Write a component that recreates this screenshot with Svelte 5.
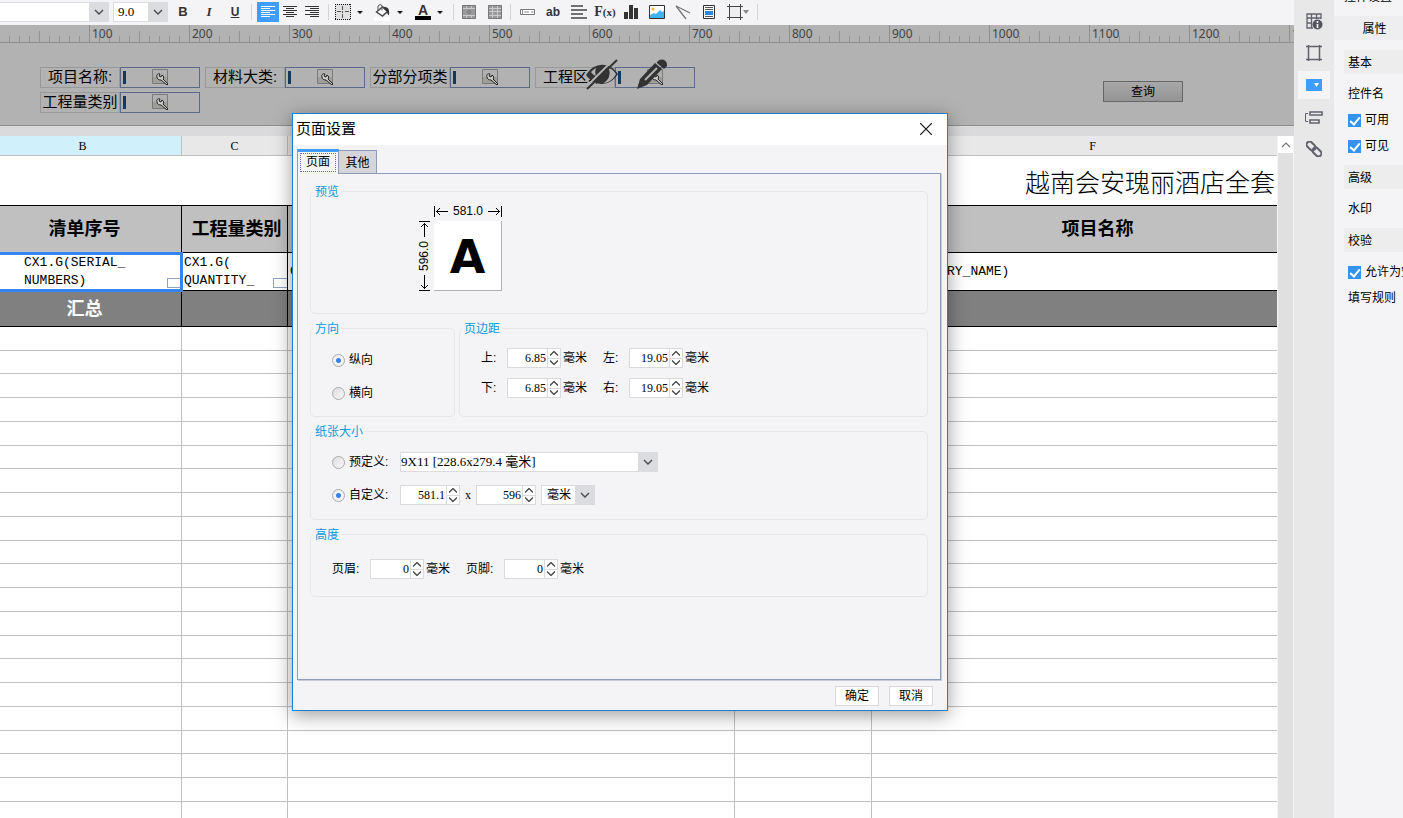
<script lang="ts">
  interface Filter {
    id: string;
    label: string;
  }

  const filters: Filter[] = [
    { id: "project", label: "项目名称:" },
    { id: "material", label: "材料大类:" },
    { id: "section", label: "分部分项类" },
    { id: "area", label: "工程区域:" },
    { id: "quantity", label: "工程量类别" },
  ];

  const marks = Array.from({ length: 13 }, (_, i) => (i + 1) * 100);
  const emptyRows = Array.from({ length: 22 }, (_, i) => i);
  const columns = ["B", "C", "D", "E", "F"];

  let orientation = $state("portrait");
  let paper = $state("custom");
  let enabled = $state(true);
  let visible = $state(true);
  let allowEmpty = $state(true);

  let margins = $state([
    { id: "top", label: "上", value: "6.85" },
    { id: "left", label: "左", value: "19.05" },
    { id: "bottom", label: "下", value: "6.85" },
    { id: "right", label: "右", value: "19.05" },
  ]);
  let size = $state({ width: "581.1", height: "596" });
  let bands = $state([
    { id: "header", label: "页眉", value: "0" },
    { id: "footer", label: "页脚", value: "0" },
  ]);

  function step(value: string, delta: number) {
    const digits = value.split(".")[1]?.length ?? 0;
    return Math.max(0, Number(value) + delta).toFixed(digits);
  }
</script>

{#snippet chevron()}
  <svg class="chevron" width="10" height="6" viewBox="0 0 10 6"><path d="M1 1l4 4 4-4" fill="none" stroke="#4a4a4a" stroke-width="1.4" /></svg>
{/snippet}

{#snippet caret()}
  <svg width="6" height="3" viewBox="0 0 6 3"><path d="M0 0h6L3 3z" fill="#111" /></svg>
{/snippet}

{#snippet arrows(onStep: (delta: number) => void)}
  <span class="arrows">
    <button aria-label="增加" onclick={() => onStep(1)}>
      <svg width="8" height="5" viewBox="0 0 8 5"><path d="M0 4.5l4-4 4 4" fill="none" stroke="#444" stroke-width="1.3" /></svg>
    </button>
    <button aria-label="减少" onclick={() => onStep(-1)}>
      <svg width="8" height="5" viewBox="0 0 8 5"><path d="M0 .5l4 4 4-4" fill="none" stroke="#444" stroke-width="1.3" /></svg>
    </button>
  </span>
{/snippet}

<div class="designer">
  <main class="workspace">
    <div class="toolbar">
      <div class="combo font-name">
        <select aria-label="字体"><option></option></select>
        {@render chevron()}
      </div>
      <div class="combo font-size">
        <select aria-label="字号"><option>9.0</option></select>
        {@render chevron()}
      </div>

      <div class="group text-style">
        <button class="tool bold">B</button>
        <button class="tool italic">I</button>
        <button class="tool underline">U</button>
      </div>
      <span class="sep"></span>
      <div class="group align">
        <button class="tool active" aria-label="左对齐">
          <svg width="16" height="14" viewBox="0 0 16 14"><path d="M1 1.5h14M1 3.5h9M1 5.5h14M1 7.5h9M1 9.5h14M1 11.5h9" stroke="#fff" /></svg>
        </button>
        <button class="tool" aria-label="居中">
          <svg width="16" height="14" viewBox="0 0 16 14"><path d="M1 1.5h14M4 3.5h8M1 5.5h14M4 7.5h8M1 9.5h14M4 11.5h8" stroke="#333" /></svg>
        </button>
        <button class="tool" aria-label="右对齐">
          <svg width="16" height="14" viewBox="0 0 16 14"><path d="M1 1.5h14M6 3.5h9M1 5.5h14M6 7.5h9M1 9.5h14M6 11.5h9" stroke="#333" /></svg>
        </button>
      </div>
      <span class="sep"></span>
      <div class="group splits">
        <div class="split">
          <button class="tool" aria-label="边框">
            <svg width="16" height="16" viewBox="0 0 16 16"><path d="M0 0h16v16H0z" fill="#e0e0e0" /><path d="M0 .5h16M0 15.500h16M.5 0v16M15.500 0v16" stroke="#111" stroke-dasharray="1 1" /><path d="M7.500 2v4M7.500 7v2M7.500 10v4M2 7.500h4M10 7.500h4" stroke="#555" /></svg>
          </button>
          <button class="drop" aria-label="边框选项">{@render caret()}</button>
        </div>
        <div class="split">
          <button class="tool" aria-label="填充颜色">
            <svg width="18" height="18" viewBox="0 0 18 18">
              <path d="M0 14h16v4H0z" fill="#fff" />
              <path d="M2.500 9l6-5 5 4.500-5 4.500z" fill="#fff" stroke="#444" stroke-width="1.400" />
              <path d="M4 7.500V3l2-1.500 2 1v5" fill="none" stroke="#555" />
              <path d="M9 3.500l4 1c2 1 2.500 4 2 7.500-1 .5-1.500-1-2-3z" fill="#333" />
            </svg>
          </button>
          <button class="drop" aria-label="填充选项">{@render caret()}</button>
        </div>
        <div class="split">
          <button class="tool font-color"><span>A</span></button>
          <button class="drop" aria-label="字体颜色选项">{@render caret()}</button>
        </div>
      </div>
      <span class="sep"></span>
      <div class="group">
        <button class="tool" aria-label="合并单元格">
          <svg width="14" height="14" viewBox="0 0 14 14"><path d="M.5.5h13v13H.5z" fill="#999" stroke="#777" /><path d="M1 3.500h12M1 10.500h12M4.500 1v2M9.500 1v2M4.500 11v2M9.500 11v2" stroke="#ccc" /><circle cx="7" cy="7" r="1.500" fill="none" stroke="#777" /></svg>
        </button>
        <button class="tool" aria-label="取消合并">
          <svg width="14" height="14" viewBox="0 0 14 14"><path d="M.5.5h13v13H.5z" fill="#999" stroke="#777" /><path d="M1 3.500h12M1 6.500h12M1 10.500h12M4.500 1v12M9.500 1v12" stroke="#ccc" /></svg>
        </button>
      </div>
      <span class="sep"></span>
      <div class="group insert">
        <button class="tool" aria-label="控件">
          <svg width="15" height="6" viewBox="0 0 15 6"><path d="M.5.5h14v5H.5z" fill="#fff" stroke="#777" /><path d="M2.500 1v4M4 3h5M11 3h2.500" stroke="#888" /></svg>
        </button>
        <button class="tool ab">ab</button>
        <button class="tool" aria-label="富文本">
          <svg width="16" height="14" viewBox="0 0 16 14"><path d="M0 1h12M0 5h16M0 9h12M0 13h16" stroke="#444" stroke-width="1.500" /></svg>
        </button>
        <button class="tool fx">F<small>(x)</small></button>
        <button class="tool" aria-label="图表">
          <svg width="14" height="14" viewBox="0 0 14 14"><path d="M0 7h4v7H0zM5 0h4v14H5zM10 3h4v11h-4z" fill="#333" /></svg>
        </button>
        <button class="tool" aria-label="图片">
          <svg width="16" height="14" viewBox="0 0 16 14"><path d="M.5.5h15v13H.5z" fill="#fff" stroke="#333" /><path d="M1 13V10l4-2 2 1 4-4 2 2 2-1v7z" fill="#3fb4f0" /><circle cx="4" cy="4" r="1.500" fill="#fbb034" /></svg>
        </button>
        <button class="tool" aria-label="斜线">
          <svg width="16" height="15" viewBox="0 0 16 15"><path d="M1 1l14 7M1 1l10 13" stroke="#777" stroke-width="1.300" /></svg>
        </button>
        <button class="tool" aria-label="子报表">
          <svg width="12" height="14" viewBox="0 0 12 14"><path d="M.5.5h11v13H.5z" fill="#fff" stroke="#333" /><path d="M2 2.500h8M2 4.500h8M2 11.500h8" stroke="#555" /><path d="M2 6h8v4H2z" fill="#2f86e0" /></svg>
        </button>
        <button class="tool wide" aria-label="悬浮元素">
          <svg width="22" height="16" viewBox="0 0 22 16"><path d="M2.500 0v16M13.500 0v16M0 2.500h16M0 13.500h16" stroke="#444" /><path d="M3 3h10v10H3z" fill="#eee" /><path d="M16 6h6l-3 4z" fill="#888" /></svg>
        </button>
      </div>
      <span class="sep"></span>
    </div>

    <div class="ruler">
      {#each marks as mark}
        <span>{mark}</span>
      {/each}
    </div>

    <section class="params">
      <div class="filters">
        {#each filters as filter}
          <div class="filter">
            <label for={filter.id}>{filter.label}</label>
            <div class="editor">
              <input id={filter.id} />
              <svg width="17" height="16" viewBox="0 0 17 16">
                <path d="M.5.5h15v14H.5z" fill="#b0b0b0" stroke="#7a7a7a" />
                <path d="M1 8h14v6H1z" fill="#a09e99" />
                <path d="M5 8c-1-2 1-4 3-3L7 7l2 1 1-2c2 1 2 3 1 4l5 5-1 1-6-5C7 11 5 10 5 8z" fill="#ccc" stroke="#222" />
              </svg>
            </div>
          </div>
        {/each}
      </div>
      <button class="query">查询</button>
      <div class="overlay-tools">
        <svg width="32" height="31" viewBox="0 0 32 31">
          <path d="M0 16C8 3 23 2 32 15 24 28 8 28 0 16z" fill="#333" />
          <path d="M20 8c5 1 8 4 10 7-3 6-8 9-13 9 7-3 8-10 3-16z" fill="#b2b2b2" />
          <path d="M5 13c2-2 3-3 5-4-1 3-1 5 0 8-2-1-4-2-5-4z" fill="#b2b2b2" />
          <path d="M18 8c6 3 6 12-2 14 8-1 10-10 5-14z" fill="#333" />
          <path d="M28 0L1 27" stroke="#b2b2b2" stroke-width="2" />
          <path d="M31 1L1 30" stroke="#333" stroke-width="2" />
        </svg>
        <svg width="30" height="31" viewBox="0 0 30 31">
          <path d="M0 30l3-10L18 4l7 6L10 26z" fill="#333" />
          <path d="M20 3c4-5 11-2 10 4l-3 3-7-6z" fill="#333" />
          <path d="M8 21L20 9" stroke="#b2b2b2" stroke-width="2" />
        </svg>
      </div>
    </section>

    <div class="sheet">
      <div class="grid">
        <table>
          <colgroup>
            <col class="col-b" />
            <col class="col-c" />
            <col class="col-d" />
            <col class="col-e" />
            <col class="col-f" />
          </colgroup>
          <thead>
            <tr>
              {#each columns as column}
                <th class:selected={column === "B"}>{column}</th>
              {/each}
            </tr>
          </thead>
          <tbody>
            <tr class="title"><td colspan="4"></td><td>越南会安瑰丽酒店全套</td></tr>
            <tr class="heads">
              <td>清单序号</td>
              <td>工程量类别</td>
              <td></td>
              <td></td>
              <td>项目名称</td>
            </tr>
            <tr class="fields">
              <td class="current">CX1.G(SERIAL_<br />NUMBERS)<i class="widget"></i></td>
              <td>CX1.G(<br />QUANTITY_<i class="widget"></i></td>
              <td>C</td>
              <td></td>
              <td class="name">RY_NAME)</td>
            </tr>
            <tr class="summary">
              <td>汇总</td>
              <td></td>
              <td></td>
              <td></td>
              <td></td>
            </tr>
            {#each emptyRows as row (row)}
              <tr class="empty">
                {#each columns as column (column)}<td></td>{/each}
              </tr>
            {/each}
          </tbody>
        </table>
      </div>
      <div class="scrollbar">
        <button aria-label="向上滚动">
          <svg width="10" height="6" viewBox="0 0 10 6"><path d="M1 5l4-4 4 4" fill="none" stroke="#777" stroke-width="1.200" /></svg>
        </button>
      </div>
    </div>
  </main>

  <nav class="rail">
    <button aria-label="单元格属性">
      <svg width="17" height="17" viewBox="0 0 17 17"><path d="M15 6V1H1v14h6M1 5h14M5.500 1v14M10.500 1v5M1 10h5" fill="none" stroke="#62626e" stroke-width="1.300" /><circle cx="11.500" cy="11.500" r="5" fill="#55555f" /><path d="M11.500 8v2M11.500 11v4" stroke="#fff" stroke-width="1.600" /></svg>
    </button>
    <button aria-label="单元格元素">
      <svg width="16" height="16" viewBox="0 0 16 16"><path d="M2.500 0v16M13.500 0v16M0 1.500h16M0 14.500h16" stroke="#62626e" stroke-width="1.500" /></svg>
    </button>
    <button class="active" aria-label="控件设置">
      <svg width="16" height="12" viewBox="0 0 16 12"><path d="M0 0h16v12H0z" fill="#409cff" /><path d="M8 4h5l-2.500 4z" fill="#fff" /></svg>
    </button>
    <button aria-label="条件属性">
      <svg width="18" height="13" viewBox="0 0 18 13"><path d="M3 2.500H.5v8H3" fill="none" stroke="#62626e" /><path d="M5 1h12v3H5zM5 9h9v3H5z" fill="#eee" stroke="#62626e" stroke-width="1.600" /></svg>
    </button>
    <button aria-label="超级链接">
      <svg width="16" height="16" viewBox="0 0 16 16"><g fill="none" stroke="#62626e" stroke-width="2"><rect x="0" y="2" width="10" height="6" rx="3" transform="rotate(45 5 5)" /><rect x="6" y="8" width="10" height="6" rx="3" transform="rotate(45 11 11)" /></g></svg>
    </button>
  </nav>

  <aside class="props">
    <div class="props-title"><span>控件设置</span></div>
    <button class="props-tab">属性</button>
    <h3>基本</h3>
    <div class="props-body">
      <div class="row">控件名</div>
      <label class="row"><input type="checkbox" bind:checked={enabled} />可用</label>
      <label class="row"><input type="checkbox" bind:checked={visible} />可见</label>
    </div>
    <h3>高级</h3>
    <div class="props-body">
      <div class="row">水印</div>
    </div>
    <h3>校验</h3>
    <div class="props-body">
      <label class="row"><input type="checkbox" bind:checked={allowEmpty} />允许为空</label>
      <div class="row">填写规则</div>
    </div>
  </aside>

  <div class="dialog" role="dialog" aria-labelledby="dialog-title">
    <header>
      <h2 id="dialog-title">页面设置</h2>
      <button class="close" aria-label="关闭">
        <svg width="12" height="12" viewBox="0 0 12 12"><path d="M0 0l12 12M12 0L0 12" stroke="#111" stroke-width="1.200" /></svg>
      </button>
    </header>

    <div class="tabs" role="tablist">
      <button class="tab active" role="tab" aria-selected="true"><span>页面</span></button>
      <button class="tab" role="tab" aria-selected="false">其他</button>
    </div>

    <div class="pane">
      <fieldset class="preview">
        <legend>预览</legend>
        <div class="measure">
          <div class="across">
            <svg width="15" height="11" viewBox="0 0 15 11"><path d="M.5 0v11M2 5.500h12M6 2L2.500 5.500 6 9" fill="none" stroke="#000" /></svg>
            <span>581.0</span>
            <svg width="15" height="11" viewBox="0 0 15 11"><path d="M14.500 0v11M1 5.500h12M9 2l3.500 3.500L9 9" fill="none" stroke="#000" /></svg>
          </div>
          <div class="down">
            <svg width="11" height="16" viewBox="0 0 11 16"><path d="M0 .5h11M5.500 2v14M2 6l3.500-3.500L9 6" fill="none" stroke="#000" /></svg>
            <span>596.0</span>
            <svg width="11" height="16" viewBox="0 0 11 16"><path d="M0 15.500h11M5.500 0v14M2 10l3.500 3.500L9 10" fill="none" stroke="#000" /></svg>
          </div>
          <div class="paper">A</div>
        </div>
      </fieldset>

      <div class="pair">
        <fieldset class="orientation">
          <legend>方向</legend>
          <div class="choices">
            <label><input type="radio" value="portrait" bind:group={orientation} />纵向</label>
            <label><input type="radio" value="landscape" bind:group={orientation} />横向</label>
          </div>
        </fieldset>

        <fieldset class="margins">
          <legend>页边距</legend>
          <div class="margin-grid">
            {#each margins as margin}
              <div class="measure-field">
                <label for={margin.id}>{margin.label}:</label>
                <span class="spinner">
                  <input id={margin.id} bind:value={margin.value} />
                  {@render arrows((d) => (margin.value = step(margin.value, d)))}
                </span>
                <span>毫米</span>
              </div>
            {/each}
          </div>
        </fieldset>
      </div>

      <fieldset class="paper-size">
        <legend>纸张大小</legend>
        <div class="lines">
          <div class="line">
            <label><input type="radio" value="preset" bind:group={paper} />预定义:</label>
            <div class="combo preset">
              <select aria-label="预定义纸张"><option>9X11 [228.6x279.4 毫米]</option></select>
              {@render chevron()}
            </div>
          </div>
          <div class="line">
            <label><input type="radio" value="custom" bind:group={paper} />自定义:</label>
            <span class="spinner wide">
              <input aria-label="宽度" bind:value={size.width} />
              {@render arrows((d) => (size.width = step(size.width, d)))}
            </span>
            <span class="times">x</span>
            <span class="spinner wide">
              <input aria-label="高度" bind:value={size.height} />
              {@render arrows((d) => (size.height = step(size.height, d)))}
            </span>
            <div class="combo unit">
              <select aria-label="单位"><option>毫米</option></select>
              {@render chevron()}
            </div>
          </div>
        </div>
      </fieldset>

      <fieldset class="bands">
        <legend>高度</legend>
        <div class="band-row">
          {#each bands as band}
            <div class="measure-field">
              <label for={band.id}>{band.label}:</label>
              <span class="spinner">
                <input id={band.id} bind:value={band.value} />
                {@render arrows((d) => (band.value = step(band.value, d)))}
              </span>
              <span>毫米</span>
            </div>
          {/each}
        </div>
      </fieldset>
    </div>

    <footer>
      <button>确定</button>
      <button>取消</button>
    </footer>
  </div>
</div>

<style>
  :global(body) {
    overflow: hidden;
  }

  .designer {
    position: relative;
    display: flex;
    height: 100vh;
    overflow: hidden;
    background: #f4f4f7;
    color: #000;
    font: 12px/16px "Liberation Sans", "Noto Sans CJK SC", sans-serif;
  }

  .designer * {
    box-sizing: border-box;
  }

  button,
  input,
  select {
    margin: 0;
    padding: 0;
    border: none;
    border-radius: 0;
    outline: none;
    background: none;
    color: inherit;
    font: inherit;
  }

  svg {
    display: block;
    flex: none;
  }

  .workspace {
    flex: 1;
    min-width: 0;
    display: flex;
    flex-direction: column;
  }

  /* toolbar */
  .toolbar {
    display: flex;
    align-items: center;
    height: 25px;
    flex: none;
    padding-bottom: 1px;
  }

  .combo {
    position: relative;
    height: 20px;
    border: 1px solid #dadce0;
    background: linear-gradient(to left, #dadce0 19px, #fff 19px);
  }

  .combo select {
    width: 100%;
    height: 100%;
    appearance: none;
    font-family: "Liberation Serif", "Noto Sans CJK SC", serif;
    font-size: 13px;
  }

  .combo .chevron {
    position: absolute;
    right: 4px;
    top: 6px;
    pointer-events: none;
  }

  .font-name {
    width: 109px;
    border-left: none;
    margin-right: 4px;
  }

  .font-size {
    width: 55px;
    margin-right: 1px;
  }

  .font-size select {
    padding-left: 4px;
  }

  .group,
  .split {
    display: flex;
    align-items: center;
  }

  .text-style {
    padding: 0 1px;
  }

  .insert {
    padding: 0 1px;
  }

  .align,
  .splits {
    padding: 0 3px;
  }

  .splits {
    gap: 6px;
  }

  .tool {
    display: flex;
    align-items: center;
    justify-content: center;
    width: 26px;
    height: 20px;
    color: #333;
  }

  .tool.wide {
    width: 32px;
  }

  .bold {
    font-weight: bold;
    font-size: 13px;
  }

  .italic {
    font: italic bold 13px "Liberation Serif", serif;
  }

  .underline {
    font-weight: bold;
    text-decoration: underline;
  }

  .align .tool {
    width: 22px;
  }

  .tool.active {
    background: #409cff;
  }

  .split .tool {
    width: 18px;
  }

  .drop {
    display: flex;
    align-items: center;
    justify-content: center;
    width: 16px;
    height: 20px;
  }

  .font-color span {
    width: 16px;
    border-bottom: 4px solid #000;
    font-weight: bold;
    font-size: 14px;
    line-height: 12px;
  }

  .ab {
    font-weight: bold;
  }

  .fx {
    font: bold 14px "Liberation Serif", serif;
  }

  .fx small {
    font-size: 11px;
  }

  .sep {
    width: 1px;
    height: 16px;
    margin: 0 2px;
    background: #d4d4d8;
  }

  /* ruler */
  .ruler {
    display: flex;
    flex: none;
    height: 18px;
    padding-left: 92px;
    overflow: hidden;
    border-bottom: 1px solid #8f8f8f;
    background:
      repeating-linear-gradient(to right, #8e8e8e 0 1px, transparent 1px 100px) 89px 0 / 100px 17px repeat-x,
      repeating-linear-gradient(to right, #929292 0 1px, transparent 1px 50px) 39px 6px / 50px 11px repeat-x,
      repeating-linear-gradient(to right, #929292 0 1px, transparent 1px 10px) 9px 11px / 10px 6px repeat-x,
      #b2b2b2;
  }

  .ruler span {
    width: 100px;
    flex: none;
    color: #444;
    font: 12px/17px "Noto Sans", sans-serif;
  }

  /* parameter pane */
  .params {
    position: relative;
    display: flex;
    justify-content: space-between;
    align-items: flex-start;
    flex: none;
    height: 83px;
    padding: 24px 111px 0 40px;
    border-bottom: 1px solid #8f8f8f;
    background: #b2b2b2;
  }

  .filters {
    display: grid;
    grid-template-columns: repeat(4, 160px);
    gap: 4px 5px;
  }

  .filter {
    display: flex;
    height: 21px;
    font-size: 15px;
    line-height: 18px;
  }

  .filter label {
    width: 80px;
    overflow: hidden;
    border: 1px solid #999;
    text-align: center;
    white-space: nowrap;
  }

  .editor {
    position: relative;
    width: 80px;
    padding-left: 2px;
    border: 1px solid #5a6a88;
  }

  .editor input {
    width: 100%;
    height: 13px;
    border-left: 3px solid #12395f;
    vertical-align: top;
    margin-top: 3px;
  }

  .editor svg {
    position: absolute;
    left: 31px;
    top: 1px;
  }

  .query {
    width: 80px;
    height: 21px;
    margin-top: 14px;
    border: 1px solid #666;
    background: linear-gradient(#a8a8a8, #949494);
  }

  .overlay-tools {
    position: absolute;
    left: 586px;
    top: 16px;
    display: flex;
    gap: 19px;
  }

  /* sheet */
  .sheet {
    display: flex;
    flex: 1;
    min-height: 0;
    border-top: 10px solid #dadadc;
  }

  .grid {
    flex: 1;
    min-width: 0;
    overflow: hidden;
    background: #fff;
  }

  table {
    width: 1314px;
    table-layout: fixed;
    border-collapse: separate;
    border-spacing: 0;
  }

  .col-b { width: 182px; }
  .col-c { width: 106px; }
  .col-d { width: 447px; }
  .col-e { width: 137px; }
  .col-f { width: 442px; }

  th,
  td {
    padding: 0;
    border-right: 1px solid #c0c0c0;
    border-bottom: 1px solid #c0c0c0;
  }

  th {
    height: 20px;
    background: #e8e8e8;
    font: 12px/16px "Liberation Serif", serif;
  }

  th.selected {
    padding-right: 16px;
    background: #d0f0fc;
  }

  .title td {
    height: 50px;
    padding-left: 153px;
    border-right: none;
    border-bottom-color: #000;
    font: 25px/32px "Noto Sans CJK SC", sans-serif;
    font-weight: 300;
    white-space: nowrap;
  }

  .heads td {
    height: 47px;
    padding-left: 4px;
    border-color: #000;
    background: #c0c0c0;
    font-size: 18px;
    font-weight: bold;
    text-align: center;
  }

  .heads td:first-child {
    padding: 0 12px 0 0;
  }

  .heads td:last-child {
    padding-left: 10px;
  }

  .fields td {
    position: relative;
    height: 38px;
    padding: 1px 0 0 2px;
    border-color: #000;
    font: 13px/18px "Liberation Mono", monospace;
  }

  .fields .current {
    padding-left: 24px;
  }

  .fields .name {
    padding-left: 75px;
  }

  .current::before {
    content: "";
    position: absolute;
    inset: -1px -2px -2px -3px;
    z-index: 1;
    border: 3px solid #3385f0;
  }

  .widget {
    position: absolute;
    right: 0;
    bottom: 2px;
    width: 14px;
    height: 10px;
    border: 1px solid #8ea3c4;
    border-right: none;
  }

  .summary td {
    height: 36px;
    padding-right: 12px;
    border-color: #000;
    background: #808080;
    color: #fff;
    font-size: 18px;
    font-weight: bold;
    text-align: center;
  }

  .empty td {
    height: 24px;
  }

  .empty:nth-child(4n + 2) td {
    height: 23px;
  }

  .scrollbar {
    width: 17px;
    flex: none;
    border-left: 1px solid #f4f4f4;
    border-right: 1px solid #f4f4f4;
    background: #e0e0e0;
  }

  .scrollbar button {
    display: flex;
    align-items: center;
    justify-content: center;
    width: 100%;
    height: 17px;
    background: #fff;
  }

  /* right rail */
  .rail {
    display: flex;
    flex-direction: column;
    gap: 4px;
    width: 40px;
    flex: none;
    padding: 7px 4px;
    background: #e8e8e8;
  }

  .rail button {
    display: flex;
    align-items: center;
    justify-content: center;
    height: 28px;
  }

  .rail .active {
    background: #f4f4f7;
  }

  .props {
    width: 69px;
    flex: none;
    overflow: hidden;
    white-space: nowrap;
  }

  .props-title {
    display: flex;
    align-items: flex-end;
    height: 16px;
    padding: 0 0 11px 10px;
  }

  .props-tab {
    width: 100%;
    height: 24px;
    margin-bottom: 10px;
    padding: 1px 0 0 12px;
    background: #eeeef0;
  }

  h3 {
    height: 24px;
    margin: 0 0 0 10px;
    padding-left: 4px;
    background: #ededed;
    font-size: 12px;
    font-weight: normal;
    line-height: 26px;
  }

  .props-body {
    padding: 7px 0 6px 14px;
  }

  .row {
    display: flex;
    align-items: center;
    height: 26px;
  }

  .row input {
    position: relative;
    width: 13px;
    height: 13px;
    flex: none;
    margin-right: 4px;
    appearance: none;
    border: 1px solid #3592ee;
    background: #fff;
  }

  .row input:checked {
    background: #3592ee;
  }

  .row input:checked::after {
    content: "";
    position: absolute;
    left: 3px;
    top: 0;
    width: 4px;
    height: 8px;
    border: solid #fff;
    border-width: 0 2px 2px 0;
    transform: rotate(40deg);
  }

  /* page setup dialog */
  .dialog {
    position: absolute;
    left: 292px;
    top: 113px;
    z-index: 2;
    width: 656px;
    border: 1px solid #1c7fd0;
    background: #f4f4f7;
    box-shadow: 0 4px 18px rgba(0, 0, 0, 0.4);
  }

  header {
    display: flex;
    align-items: center;
    justify-content: space-between;
    height: 31px;
    padding: 0 15px 2px 3px;
    background: #fff;
  }

  h2 {
    margin: 0;
    font-size: 15px;
    font-weight: normal;
    line-height: 20px;
  }

  .tabs {
    display: flex;
    align-items: flex-end;
    padding: 4px 5px 0;
  }

  .tab {
    width: 38px;
    height: 23px;
    padding-top: 2px;
    border: 1px solid #8c9cba;
    border-left: none;
    border-bottom: none;
    background: #d5d5db;
  }

  .tab.active {
    width: 42px;
    height: 25px;
    margin: 0 0 -1px -1px;
    padding: 0 2px 2px;
    border-left: 1px solid #8c9cba;
    border-top: 3px solid #409cff;
    background: #f4f4f7;
    z-index: 1;
  }

  .tab.active span {
    display: block;
    height: 19px;
    border: 1px dotted #66c;
    line-height: 16px;
  }

  .pane {
    display: flex;
    flex-direction: column;
    gap: 6px;
    height: 507px;
    margin: 0 6px 0 4px;
    padding: 9px 12px;
    border: 1px solid #8c9cba;
    box-shadow: 1px 1px 0 #c8ccd6;
  }

  fieldset {
    min-width: 0;
    margin: 0;
    padding: 0;
    border: 1px solid #e6e6e9;
    border-radius: 5px;
  }

  legend {
    margin-left: 2px;
    padding: 1px 2px 0;
    color: #0a9be0;
  }

  .preview {
    height: 131px;
  }

  .measure {
    display: grid;
    grid-template-columns: 12px 68px;
    gap: 4px;
    padding: 5px 0 0 107px;
  }

  .across {
    grid-column: 2;
    display: flex;
    align-items: center;
    justify-content: space-between;
    height: 12px;
  }

  .down {
    display: flex;
    flex-direction: column;
    align-items: center;
    justify-content: space-between;
  }

  .down span {
    writing-mode: vertical-rl;
    transform: rotate(180deg);
  }

  .paper {
    height: 70px;
    border: 1px solid #b0b0b0;
    border-width: 0 1px 1px 0;
    background: #fff;
    font: bold 46px/72px "DejaVu Sans", sans-serif;
    text-align: center;
  }

  .pair {
    display: flex;
    gap: 4px;
  }

  .orientation {
    width: 145px;
    height: 97px;
  }

  .choices {
    display: flex;
    flex-direction: column;
    gap: 13px;
    padding: 13px 0 0 21px;
  }

  .margins {
    flex: 1;
  }

  .margin-grid {
    display: grid;
    grid-template-columns: repeat(2, 107px);
    gap: 10px 15px;
    padding: 11px 0 0 21px;
  }

  .choices label,
  .line label,
  .measure-field {
    display: flex;
    align-items: center;
    height: 20px;
  }

  input[type="radio"] {
    width: 13px;
    height: 13px;
    margin-right: 4px;
    appearance: none;
    border: 1px solid #aaa;
    border-radius: 50%;
    background: linear-gradient(135deg, #ddd, #fafafa);
  }

  input[type="radio"]:checked {
    background: radial-gradient(circle, #3584e8 2px, #f2f2f2 3px);
  }

  .spinner {
    display: flex;
    width: 54px;
    height: 20px;
    border: 1px solid #dadadd;
    background: #fff;
  }

  .spinner.wide {
    width: 60px;
  }

  .spinner input {
    flex: 1;
    min-width: 0;
    font-family: "Liberation Serif", serif;
    text-align: right;
  }

  .arrows {
    display: flex;
    flex-direction: column;
    width: 13px;
    margin-left: 1px;
    border-left: 1px solid #dadadd;
  }

  .arrows button {
    flex: 1;
    display: flex;
    align-items: center;
    justify-content: center;
  }

  .arrows button:first-child {
    border-bottom: 1px solid #dadadd;
  }

  .measure-field {
    gap: 2px;
    white-space: nowrap;
  }

  .measure-field label {
    width: 24px;
  }

  .paper-size {
    height: 97px;
  }

  .lines {
    display: flex;
    flex-direction: column;
    gap: 13px;
    padding: 12px 0 0 21px;
  }

  .line {
    display: flex;
    align-items: center;
  }

  .line label {
    width: 68px;
  }

  .preset {
    width: 258px;
  }

  .times {
    width: 16px;
    text-align: center;
    font-family: "Liberation Serif", serif;
  }

  .unit {
    width: 54px;
    margin-left: 5px;
  }

  .unit select {
    padding-left: 5px;
    font-size: 12px;
  }

  .bands {
    height: 71px;
  }

  .band-row {
    display: flex;
    gap: 16px;
    padding: 16px 0 0 21px;
  }

  .band-row label {
    width: 36px;
  }

  footer {
    display: flex;
    justify-content: flex-end;
    gap: 10px;
    padding: 6px 14px 4px;
  }

  footer button {
    width: 44px;
    height: 20px;
    border: 1px solid #dadadd;
    background: #fff;
  }
</style>
